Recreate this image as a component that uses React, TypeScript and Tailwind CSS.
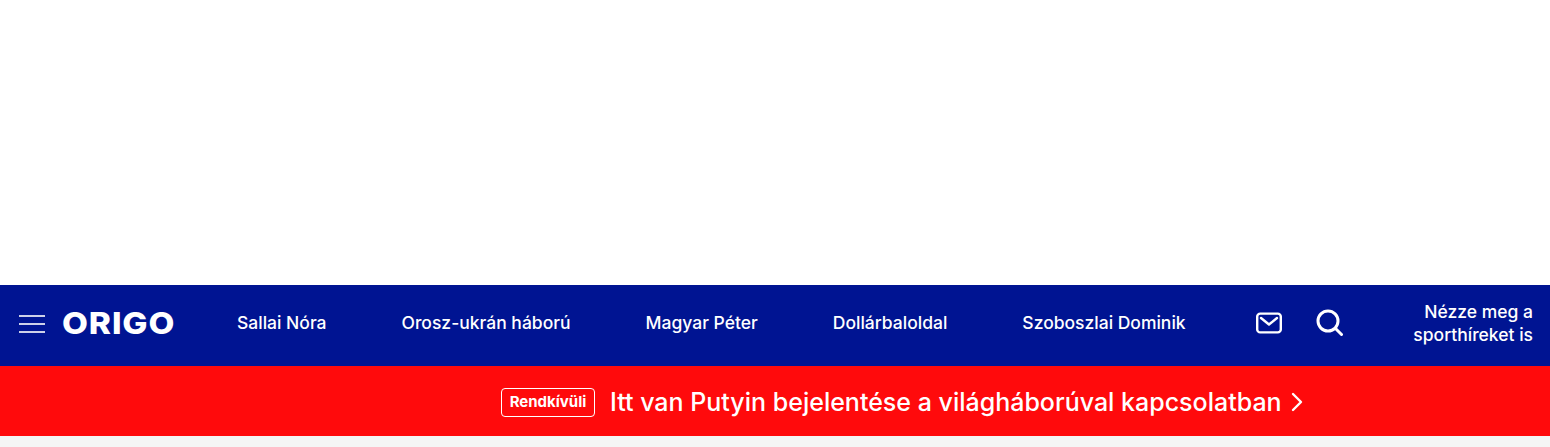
export default function App() {
  const links = ["Sallai Nóra", "Orosz-ukrán háború", "Magyar Péter", "Dollárbaloldal", "Szoboszlai Dominik"];
  return (
    <div className="h-[447px] w-full overflow-hidden bg-white font-['Inter',sans-serif] text-white">
      <div className="h-[285px]" />
      <header className="flex h-[81px] items-center bg-[#001492] pb-[6px] pl-[19px] pr-[17px]">
        <div className="mt-[2px] flex w-[26px] flex-col gap-[6px]">
          <span className="h-[2px] bg-white/80" />
          <span className="h-[2px] bg-white/80" />
          <span className="h-[2px] bg-white/80" />
        </div>
        <div className="ml-[17px] mt-[2px] w-[175px] origin-left scale-x-[1.1] text-[30.5px] font-extrabold leading-none tracking-[0.8px]">ORIGO</div>
        <nav className="flex translate-y-[1px] gap-[75px] text-[17.5px] font-medium">
          {links.map((l) => (
            <a key={l}>{l}</a>
          ))}
        </nav>
        <svg className="ml-[70px]" width="26" height="22" viewBox="0 0 26 22" fill="none" stroke="white" strokeWidth="2.4" strokeLinecap="round" strokeLinejoin="round">
          <rect x="1.2" y="1.6" width="23.6" height="18.8" rx="3" />
          <path d="M5 6l8 6.5L21 6" />
        </svg>
        <svg className="ml-[34px]" width="27" height="27" viewBox="0 0 27 27" fill="none" stroke="white" strokeWidth="3" strokeLinecap="round">
          <circle cx="12" cy="12" r="10" />
          <path d="M19.5 19.5L25.5 25.5" />
        </svg>
        <div className="ml-auto text-right text-[17.5px] font-medium leading-[23px]">
          Nézze meg a<br />sporthíreket is
        </div>
      </header>
      <div className="flex h-[70px] items-center bg-[#ff0a0c] pl-[501px] pt-[2px]">
        <span className="flex h-[29px] w-[94px] items-center justify-center rounded-[4px] border border-white text-[15px] font-bold">Rendkívüli</span>
        <span className="ml-[15px] translate-y-[1px] text-[25px] font-medium">Itt van Putyin bejelentése a világháborúval kapcsolatban</span>
        <svg className="ml-[9px]" width="12" height="20" viewBox="0 0 12 20" fill="none" stroke="white" strokeWidth="2.4" strokeLinecap="round" strokeLinejoin="round">
          <path d="M2 2l8 8-8 8" />
        </svg>
      </div>
      <div className="h-[11px] bg-[#f5f5f5]" />
    </div>
  );
}
